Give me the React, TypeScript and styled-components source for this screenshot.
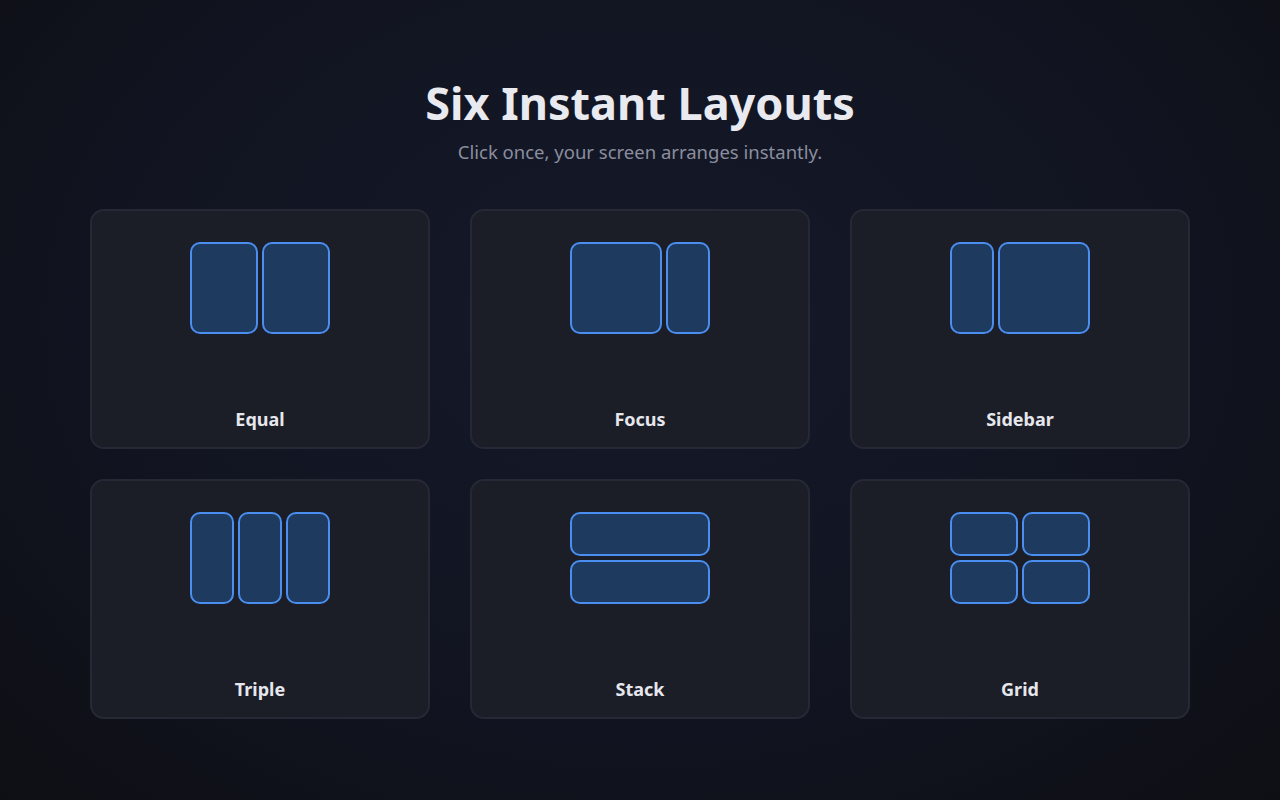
import React from 'react';
import styled, { createGlobalStyle } from 'styled-components';

const Global = createGlobalStyle`
  html, body { margin: 0; height: 100%; }
  body {
    background: radial-gradient(ellipse at 50% 40%, #151929 0%, #111420 60%, #0e0f14 100%);
    font-family: "Noto Sans", "Open Sans", sans-serif;
    color: #e8e9ee;
  }
`;

const Page = styled.div`
  width: 1280px;
  height: 800px;
  box-sizing: border-box;
  padding-top: 72px;
  display: flex;
  flex-direction: column;
  align-items: center;
`;

const Title = styled.h1`
  margin: 0;
  font-size: 45px;
  line-height: 62px;
  font-weight: 700;
  color: #e9eaef;
`;

const Subtitle = styled.p`
  margin: 6px 0 0;
  font-size: 18.5px;
  line-height: 24px;
  color: #8a8e9f;
`;

const Grid = styled.div`
  margin-top: 45px;
  display: grid;
  grid-template-columns: repeat(3, 340px);
  column-gap: 40px;
  row-gap: 30px;
`;

const Card = styled.div`
  height: 240px;
  box-sizing: border-box;
  background: #1b1d27;
  border: 2px solid #262935;
  border-radius: 14px;
  padding-top: 31px;
  display: flex;
  flex-direction: column;
  align-items: center;
`;

const Preview = styled.div<{ cols: string; rows: string }>`
  width: 140px;
  height: 92px;
  display: grid;
  grid-template-columns: ${(p) => p.cols};
  grid-template-rows: ${(p) => p.rows};
  gap: 4px;
`;

const Pane = styled.div`
  background: #1f3a5f;
  border: 2px solid #4a8ef0;
  border-radius: 10px;
`;

const Label = styled.div`
  margin-top: auto;
  margin-bottom: 16px;
  font-size: 18px;
  font-weight: 700;
  color: #e6e7ec;
`;

const layouts = [
  { name: 'Equal', cols: '1fr 1fr', rows: '1fr', n: 2 },
  { name: 'Focus', cols: '92px 44px', rows: '1fr', n: 2 },
  { name: 'Sidebar', cols: '44px 92px', rows: '1fr', n: 2 },
  { name: 'Triple', cols: '1fr 1fr 1fr', rows: '1fr', n: 3 },
  { name: 'Stack', cols: '1fr', rows: '1fr 1fr', n: 2 },
  { name: 'Grid', cols: '1fr 1fr', rows: '1fr 1fr', n: 4 },
];

const App: React.FC = () => (
  <>
    <Global />
    <Page>
      <Title>Six Instant Layouts</Title>
      <Subtitle>Click once, your screen arranges instantly.</Subtitle>
      <Grid>
        {layouts.map((l) => (
          <Card key={l.name}>
            <Preview cols={l.cols} rows={l.rows}>
              {Array.from({ length: l.n }).map((_, i) => (
                <Pane key={i} />
              ))}
            </Preview>
            <Label>{l.name}</Label>
          </Card>
        ))}
      </Grid>
    </Page>
  </>
);

export default App;
